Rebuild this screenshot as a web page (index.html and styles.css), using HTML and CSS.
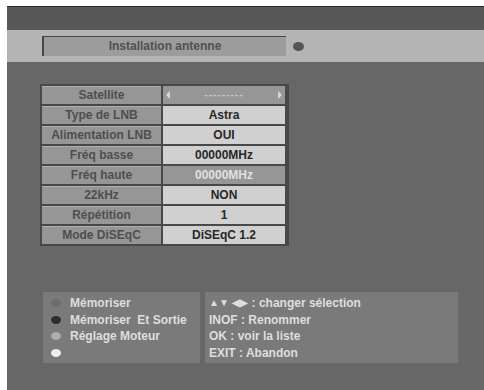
FILE: index.html
```html
<!DOCTYPE html>
<html lang="fr">
  <head>
    <meta charset="UTF-8" />
    <meta name="viewport" content="width=device-width, initial-scale=1.0" />
    <title>Installation antenne</title>
    <link rel="stylesheet" href="styles.css">
  </head>
  <body>
    <div class="screen">
      <div class="topbar"></div>
      <div class="titlebar">
        <div class="title">Installation antenne</div>
        <span class="led"></span>
      </div>

      <div class="table">
        <div class="label">Satellite</div>
        <div class="value sel picker">
          <span class="arrow left"></span>
          <span class="dashes">---------</span>
          <span class="arrow right"></span>
        </div>
        <div class="label">Type de LNB</div>
        <div class="value">Astra</div>
        <div class="label">Alimentation LNB</div>
        <div class="value">OUI</div>
        <div class="label">Fréq basse</div>
        <div class="value">00000MHz</div>
        <div class="label">Fréq haute</div>
        <div class="value sel">00000MHz</div>
        <div class="label">22kHz</div>
        <div class="value">NON</div>
        <div class="label">Répétition</div>
        <div class="value">1</div>
        <div class="label">Mode DiSEqC</div>
        <div class="value">DiSEqC 1.2</div>
      </div>

      <div class="help">
        <div class="keys">
          <p><span class="dot red"></span>Mémoriser</p>
          <p><span class="dot green"></span>Mémoriser&nbsp; Et Sortie</p>
          <p><span class="dot yellow"></span>Réglage Moteur</p>
          <p><span class="dot blue"></span></p>
        </div>
        <div class="hints">
          <p><span class="tri">▲▼ ◀▶</span> : changer sélection</p>
          <p>INOF : Renommer</p>
          <p>OK : voir la liste</p>
          <p>EXIT : Abandon</p>
        </div>
      </div>
    </div>
  </body>
</html>
```

FILE: styles.css
```css
body {
  margin: 0;
  padding: 6px 0 0 7px;
  background-color: white;
  font-family: "Liberation Sans", Arial, sans-serif;
  font-weight: bold;
  font-size: 12px;
  overflow: hidden;
}
.screen {
  height: 384px;
  background-color: rgb(103, 103, 103);
  border-top: 1px solid rgb(40, 40, 40);
  box-sizing: border-box;
}
.topbar {
  height: 23px;
  background-color: rgb(88, 88, 88);
}
.titlebar {
  height: 32px;
  background-color: rgb(180, 180, 180);
  display: flex;
  align-items: center;
  padding-left: 35px;
}
.title {
  width: 242px;
  height: 19px;
  line-height: 19px;
  text-align: center;
  color: rgb(80, 80, 80);
  background-color: rgb(156, 156, 156);
  border-top: 1px solid rgb(70, 70, 70);
  border-left: 2px solid rgb(70, 70, 70);
}
.led {
  width: 11px;
  height: 9px;
  border-radius: 50%;
  margin-left: 7px;
  background-color: rgb(85, 85, 85);
}
.table {
  margin: 22px 0 0 33px;
  width: 245px;
  display: grid;
  grid-template-columns: 119px 122px;
  grid-auto-rows: 18px;
  gap: 2px;
  padding: 2px;
  background-color: rgb(72, 72, 72);
}
.label,
.value {
  text-align: center;
  line-height: 18px;
}
.label {
  background-color: rgb(150, 150, 150);
  color: rgb(78, 78, 78);
  box-shadow: inset 0 1px 0 rgb(175, 175, 175);
}
.value {
  background-color: rgb(208, 208, 208);
  color: rgb(40, 40, 40);
}
.value.sel {
  background-color: rgb(150, 150, 150);
  color: rgb(225, 225, 225);
}
.picker {
  display: flex;
  align-items: center;
  justify-content: space-between;
  padding: 0 3px;
}
.dashes {
  color: rgb(200, 200, 200);
  font-size: 10px;
  letter-spacing: 1px;
}
.arrow {
  width: 0;
  height: 0;
  border-top: 4px solid transparent;
  border-bottom: 4px solid transparent;
}
.arrow.left {
  border-right: 4px solid rgb(215, 215, 215);
}
.arrow.right {
  border-left: 4px solid rgb(215, 215, 215);
}
.help {
  display: flex;
  gap: 5px;
  margin: 46px 0 0 36px;
}
.keys,
.hints {
  height: 71px;
  background-color: rgb(122, 122, 122);
  padding-top: 3px;
  box-sizing: border-box;
}
.keys {
  width: 157px;
  padding-left: 8px;
}
.hints {
  width: 253px;
  padding-left: 4px;
}
.help p {
  margin: 0;
  height: 16.5px;
  line-height: 16.5px;
  color: rgb(222, 222, 222);
  display: flex;
  align-items: center;
  white-space: nowrap;
}
.dot {
  width: 10px;
  height: 8px;
  border-radius: 50%;
  margin-right: 9px;
}
.red {
  background-color: rgb(108, 108, 108);
}
.green {
  background-color: rgb(45, 45, 45);
}
.yellow {
  background-color: rgb(172, 172, 172);
}
.blue {
  background-color: rgb(238, 238, 238);
}
.tri {
  font-size: 10px;
  margin-right: 4px;
}
```
